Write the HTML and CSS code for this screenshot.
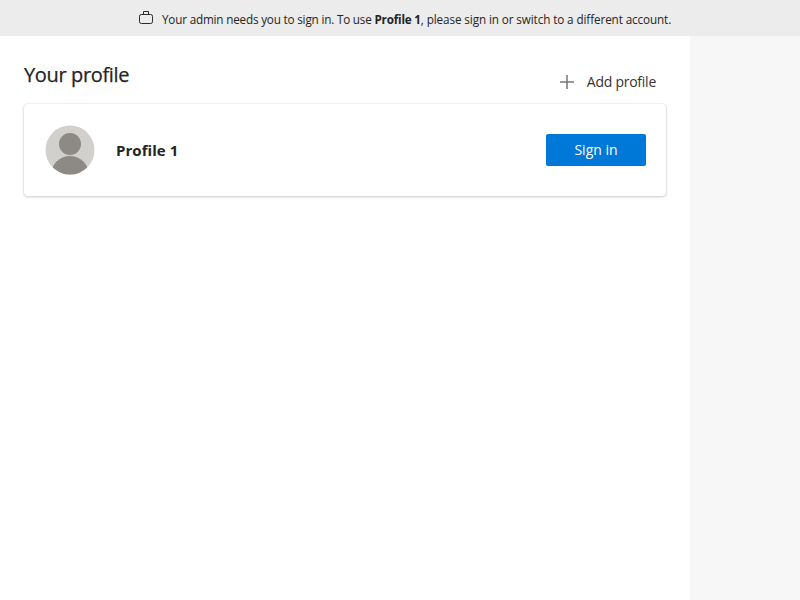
FILE: index.html
```html
<!DOCTYPE html>
<html lang="en">
<head>
<meta charset="utf-8">
<title>Your profile</title>
<link rel="stylesheet" href="styles.css">
</head>
<body>
<div class="banner">
  <svg class="briefcase" width="16" height="16" viewBox="0 0 16 16" fill="none" stroke="#2b2b2b" stroke-width="1"><rect x="1.5" y="4.5" width="13" height="9" rx="1.8"/><path d="M5.5 4.5V1.5H10.5V4.5"/></svg>
  <p class="message"><span class="lead">Your admin needs you to sign in. To use </span><b class="name">Profile 1</b><span class="tail">, please sign in or switch to a different account.</span></p>
</div>
<main class="page">
  <header class="head">
    <h1 class="title">Your profile</h1>
    <button class="add"><svg width="14" height="14" viewBox="0 0 14 14" stroke="#777" stroke-width="1.5"><path d="M0 7H14M7 0V14"/></svg><span class="add-label">Add profile</span></button>
  </header>
  <section class="card">
    <svg class="avatar" width="50" height="50" viewBox="0 0 50 50"><defs><clipPath id="disc"><circle cx="25" cy="25" r="24.5"/></clipPath></defs><circle cx="25" cy="25" r="24.5" fill="#d2d0cc"/><g clip-path="url(#disc)" fill="#8d8985"><circle cx="25" cy="19" r="11"/><circle cx="25" cy="50" r="19"/></g></svg>
    <span class="profile">Profile 1</span>
    <button class="signin"><span>Sign in</span></button>
  </section>
</main>
</body>
</html>
```
FILE: styles.css
```css
* { box-sizing: border-box; }
body { margin: 0; height: 600px; overflow: hidden; background: #f7f7f7; color: #242424; font-family: "Open Sans", "Noto Sans", sans-serif; }
.banner { height: 36px; background: #ececec; display: flex; align-items: center; padding-left: 138px; gap: 8px; }
.message { margin: 0; font-size: 11.7px; line-height: 16px; white-space: pre; padding-top: 2px; }
.lead { letter-spacing: -0.18px; }
.name { letter-spacing: -0.2px; }
.tail { letter-spacing: -0.1px; }
.page { width: 690px; height: 564px; background: #fff; padding: 24px 24px 0; }
.head { display: flex; justify-content: space-between; height: 44px; }
.title { margin: 0; font-size: 20px; line-height: 30px; font-weight: 500; letter-spacing: -0.35px; -webkit-text-stroke: 0.25px currentColor; }
button { border: 0; font-family: inherit; padding: 0; }
.add { background: none; display: flex; align-items: center; gap: 13px; font-size: 14px; height: 20px; margin: 12px 10px 0 0; color: #333; }
.add-label { letter-spacing: -0.25px; padding-bottom: 2px; }
.card { width: 642px; height: 92px; border-radius: 4px; background: #fff; box-shadow: 0 0 2px rgba(0,0,0,.14), 0 1px 3px rgba(0,0,0,.18); display: flex; align-items: center; padding: 0 20px 0 21px; }
.profile { margin-left: 21px; font-size: 15px; font-weight: 700; letter-spacing: 0.05px; }
.signin { margin-left: auto; width: 100px; height: 32px; border-radius: 2px; background: #0078d7; color: #fff; font-size: 14px; padding-bottom: 1px; }
```
